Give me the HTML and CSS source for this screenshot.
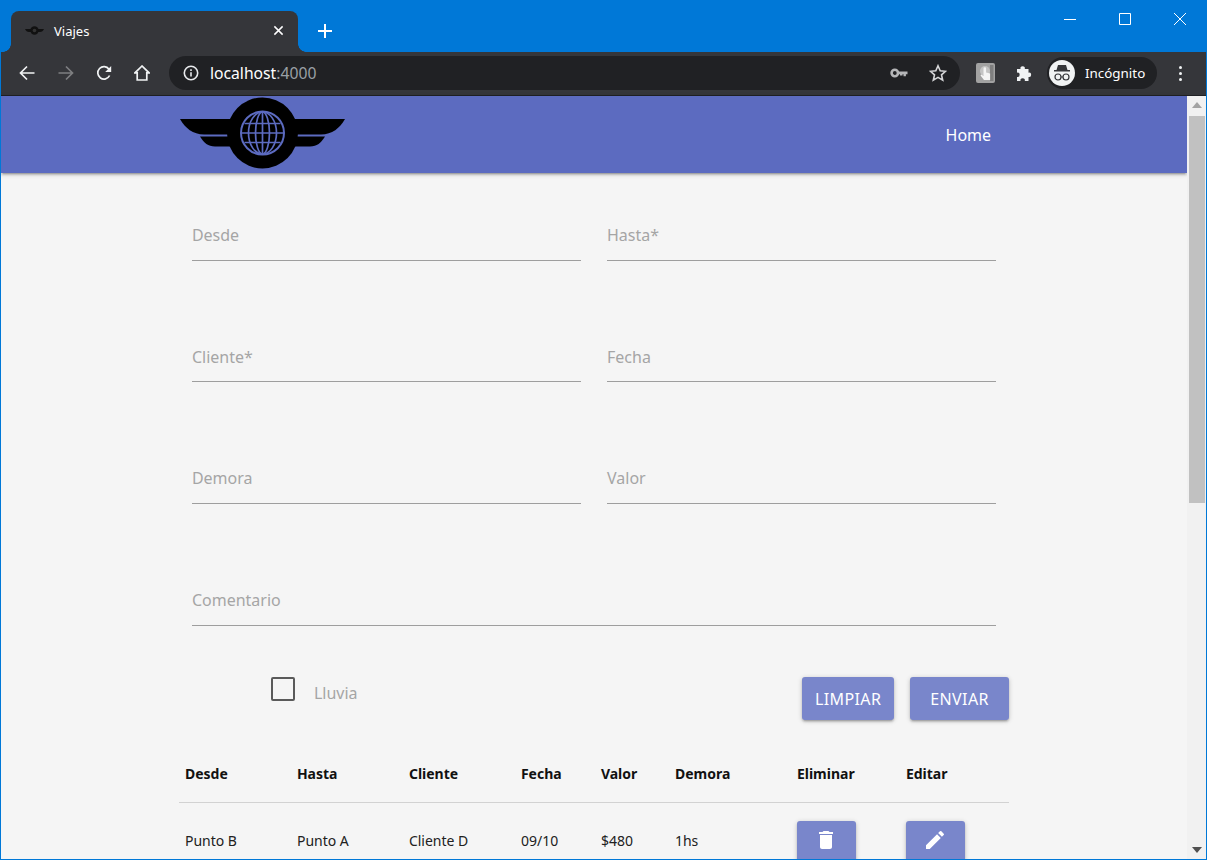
FILE: index.html
```html
<!DOCTYPE html>
<html lang="es">
<head>
    <meta charset="UTF-8">
    <meta name="viewport" content="width=device-width, initial-scale=1.0">
    <title>Viajes</title>
    <link rel="stylesheet" href="styles.css">
</head>
<body>
    <div class="window">
        <!-- browser chrome -->
        <div class="titlebar">
            <div class="tab">
                <svg class="favicon" viewBox="0 0 19 9">
                    <path d="M0 3h19c-1 2-2 3-4 3h-2.500a3.500 3.500 0 0 1-6 0H4C2 6 1 5 0 3z"/>
                    <circle cx="9.500" cy="4.500" r="4.200"/>
                    <circle class="favicon-eye" cx="9.500" cy="4.500" r="1.800"/>
                </svg>
                <span class="tab-title">Viajes</span>
                <svg class="tab-close" viewBox="0 0 12 12"><path d="M1.500 1.500l9 9M10.500 1.500l-9 9"/></svg>
            </div>
            <svg class="new-tab" viewBox="0 0 14 14"><path d="M7 0v14M0 7h14"/></svg>
            <div class="window-controls">
                <div class="win-btn"><svg viewBox="0 0 12 12"><path d="M0 6.500h12"/></svg></div>
                <div class="win-btn"><svg viewBox="0 0 12 12"><path d="M.5.5h11v11H.5z"/></svg></div>
                <div class="win-btn"><svg viewBox="0 0 12 12"><path d="M0 0l12 12M12 0L0 12"/></svg></div>
            </div>
        </div>
        <div class="toolbar">
            <div class="tool tool-back"><svg viewBox="0 0 16 16"><path d="M15.500 8H1.500M8 1.500L1.500 8 8 14.500"/></svg></div>
            <div class="tool tool-off"><svg viewBox="0 0 16 16"><path d="M.5 8h14M8 1.500L14.500 8 8 14.500"/></svg></div>
            <div class="tool"><svg viewBox="0 0 16 16"><path d="M13.600 10.500A6.200 6.200 0 1 1 13 4.200"/><path class="solid" d="M15.200.9v6h-6z"/></svg></div>
            <div class="tool"><svg viewBox="0 0 16 16"><path d="M8 1L1 7.800h2.200V15h9.600V7.800H15z"/></svg></div>
            <div class="address">
                <svg class="info" viewBox="0 0 16 16"><circle cx="8" cy="8" r="6.700"/><path d="M8 7.200v4.400M8 4.200v1.700"/></svg>
                <span class="host">localhost<span class="port">:4000</span></span>
                <svg class="key" viewBox="0 0 18 12"><circle cx="4.800" cy="6" r="3.200"/><path class="solid" d="M8 4.400h9.500v2.800h-1.600v2h-2.400v-2h-1v1.200H10V7.200H8z"/></svg>
                <svg class="star" viewBox="0 0 18 18"><path d="M9 1.800l2.200 5 5.300.5-4 3.600 1.200 5.300L9 13.400l-4.700 2.800 1.200-5.300-4-3.600 5.300-.5z"/></svg>
            </div>
            <svg class="ext-shot" viewBox="0 0 19 20">
                <rect class="ext-tile" width="19" height="20" rx="2"/>
                <rect class="ext-shade" x="14" y="2" width="3.500" height="16"/>
                <circle class="ext-glow" cx="9" cy="8" r="5"/>
                <path class="ext-hand" d="M7.500 5.500a1.300 1.300 0 0 1 2.600 0v4l4 1v6.500H8L4.500 12.500l1-1 2 1.500z"/>
            </svg>
            <svg class="puzzle" viewBox="0 0 18 18"><path d="M2 5h3.500a2.200 2.200 0 1 1 4.300 0h3.700v3.700a2.200 2.200 0 1 1 0 4.300V17H9.800a2.200 2.200 0 1 0-4.300 0H2v-4a2.200 2.200 0 1 0 0-4.300z"/></svg>
            <div class="profile">
                <div class="avatar">
                    <svg viewBox="0 0 26 26">
                        <path class="spy-hat" d="M9 5h8l1.500 5H21v1.500H5V10h2.500z"/>
                        <circle class="spy-eye" cx="9" cy="17" r="3"/>
                        <circle class="spy-eye" cx="17" cy="17" r="3"/>
                        <path class="spy-eye" d="M12 17h2"/>
                    </svg>
                </div>
                <span>Incógnito</span>
            </div>
            <div class="menu-dots"><i></i><i></i><i></i></div>
        </div>

        <div class="viewport">
            <div class="page">
                <nav class="nav">
                    <div class="nav-inner">
                        <svg class="logo" viewBox="0 0 165 72">
                            <path d="M0 22H50V37.500H24C13 37.500 5 31 0 22Z"/>
                            <path d="M165 22H115V37.500H141C152 37.500 160 31 165 22Z"/>
                            <path d="M20 39.500H50V49.500H35C28 49.500 24 46 20 39.500Z"/>
                            <path d="M145 39.500H115V49.500H130C137 49.500 141 46 145 39.500Z"/>
                            <circle cx="82.500" cy="36" r="35.500"/>
                            <circle class="globe-ring" cx="82.500" cy="36" r="21.500"/>
                            <g class="globe-lines">
                                <path d="M82.500 15V57M62 36H103M64.500 26.500H100.500M64.500 45.500H100.500"/>
                                <ellipse cx="82.500" cy="36" rx="7" ry="21"/>
                                <ellipse cx="82.500" cy="36" rx="14" ry="21"/>
                            </g>
                        </svg>
                        <a class="nav-link">Home</a>
                    </div>
                </nav>

                <div class="container">
                    <form class="trip-form">
                        <div class="field">Desde</div>
                        <div class="field">Hasta*</div>
                        <div class="field">Cliente*</div>
                        <div class="field">Fecha</div>
                        <div class="field">Demora</div>
                        <div class="field">Valor</div>
                        <div class="field field-wide">Comentario</div>
                    </form>

                    <div class="form-actions">
                        <label class="check">
                            <span class="check-box"></span>
                            <span class="check-label">Lluvia</span>
                        </label>
                        <div class="buttons">
                            <button type="button" class="btn btn-clear">Limpiar</button>
                            <button type="button" class="btn btn-send">Enviar</button>
                        </div>
                    </div>

                    <table class="trips">
                        <thead>
                            <tr>
                                <th class="col-place">Desde</th>
                                <th class="col-place">Hasta</th>
                                <th class="col-place">Cliente</th>
                                <th class="col-date">Fecha</th>
                                <th class="col-value">Valor</th>
                                <th class="col-delay">Demora</th>
                                <th class="col-action">Eliminar</th>
                                <th>Editar</th>
                            </tr>
                        </thead>
                        <tbody>
                            <tr>
                                <td>Punto B</td>
                                <td>Punto A</td>
                                <td>Cliente D</td>
                                <td>09/10</td>
                                <td>$480</td>
                                <td>1hs</td>
                                <td class="cell-action">
                                    <button type="button" class="btn btn-icon">
                                        <svg viewBox="0 0 24 24"><path d="M6 19c0 1.100.9 2 2 2h8c1.100 0 2-.9 2-2V7H6v12zM19 4h-3.500l-1-1h-5l-1 1H5v2h14V4z"/></svg>
                                    </button>
                                </td>
                                <td class="cell-action">
                                    <button type="button" class="btn btn-icon">
                                        <svg viewBox="0 0 24 24"><path d="M3 17.250V21h3.750L17.810 9.940l-3.750-3.750L3 17.250zM20.710 7.040a1 1 0 0 0 0-1.410l-2.340-2.340a1 1 0 0 0-1.410 0l-1.830 1.830 3.750 3.750 1.830-1.830z"/></svg>
                                    </button>
                                </td>
                            </tr>
                        </tbody>
                    </table>
                </div>
            </div>

            <div class="scrollbar">
                <div class="arrow-up"></div>
                <div class="thumb"></div>
                <div class="arrow-down"></div>
            </div>
        </div>
    </div>
</body>
</html>
```

FILE: styles.css
```css
* {
    box-sizing: border-box;
}

html, body {
    margin: 0;
    height: 100%;
    overflow: hidden;
}

body {
    font-family: "Noto Sans", "Open Sans", sans-serif;
}

.window {
    display: flex;
    flex-direction: column;
    width: 1207px;
    height: 860px;
    border: 1px solid #0078d7;
    overflow: hidden;
}

/* title bar */
.titlebar {
    display: flex;
    align-items: flex-start;
    flex: none;
    height: 51px;
    background-color: #0078d7;
}

.tab {
    position: relative;
    display: flex;
    align-items: center;
    width: 287px;
    height: 41px;
    margin: 10px 0 0 10px;
    padding: 0 14px 2px 14px;
    background-color: #35363a;
    border-radius: 8px 8px 0 0;
    color: #fff;
    font-size: 13px;
}

.tab::before, .tab::after {
    content: "";
    position: absolute;
    bottom: 0;
    width: 8px;
    height: 8px;
    background: radial-gradient(circle at 0 0, #0078d7 7.500px, #35363a 8px);
}

.tab::before {
    left: -8px;
}

.tab::after {
    right: -8px;
    transform: scaleX(-1);
}

.favicon {
    width: 19px;
    height: 9px;
    margin-right: 10px;
    fill: #111;
}

.favicon-eye {
    fill: #333;
}

.tab-title {
    flex: 1;
}

.tab-close {
    width: 11px;
    height: 11px;
    fill: none;
    stroke: #fff;
    stroke-width: 1.600;
}

.new-tab {
    width: 14px;
    height: 14px;
    margin: 23px 0 0 20px;
    fill: none;
    stroke: #fff;
    stroke-width: 2;
}

.window-controls {
    display: flex;
    margin-left: auto;
    margin-right: -1px;
}

.win-btn {
    display: flex;
    align-items: center;
    justify-content: center;
    width: 55px;
    height: 35px;
}

.win-btn svg {
    width: 12px;
    height: 12px;
    fill: none;
    stroke: #fff;
    stroke-width: 1;
}

/* toolbar */
.toolbar {
    display: flex;
    align-items: center;
    flex: none;
    height: 44px;
    padding: 0 0 1px 8px;
    background-color: #35363a;
    border-bottom: 1px solid #202124;
}

.tool {
    display: flex;
    align-items: center;
    justify-content: center;
    width: 38px;
    height: 34px;
}

.tool svg {
    width: 16px;
    height: 16px;
    fill: none;
    stroke: #f1f3f4;
    stroke-width: 1.700;
}

.tool svg .solid {
    fill: #f1f3f4;
    stroke: none;
}

.tool-back {
    margin: 0 1px 0 -1px;
}

.tool-off svg {
    stroke: #7e7f81;
}

.address {
    display: flex;
    align-items: center;
    width: 791px;
    height: 34px;
    margin-left: 8px;
    padding: 0 13px 0 14px;
    background-color: #202124;
    border-radius: 17px;
    color: #fff;
    font-size: 15.700px;
}

.info {
    width: 16px;
    height: 16px;
    margin-right: 11px;
    fill: none;
    stroke: #e8eaed;
    stroke-width: 1.600;
}

.host {
    flex: 1;
}

.port {
    color: #9aa0a6;
}

.key {
    width: 18px;
    height: 12px;
    margin-right: 21px;
    fill: none;
    stroke: #b5b6b8;
    stroke-width: 2.600;
}

.key .solid {
    fill: #b5b6b8;
    stroke: none;
}

.star {
    width: 18px;
    height: 18px;
    fill: none;
    stroke: #d5d6d8;
    stroke-width: 1.600;
}

.ext-shot {
    width: 19px;
    height: 20px;
    margin-left: 16px;
}

.ext-tile {
    fill: #a2a2a2;
}

.ext-shade {
    fill: #7f7f7f;
}

.ext-glow {
    fill: #c4c4c4;
}

.ext-hand {
    fill: #f4f4f4;
}

.puzzle {
    width: 18px;
    height: 18px;
    margin-left: 20px;
    fill: #f1f3f4;
}

.profile {
    display: flex;
    align-items: center;
    width: 110px;
    height: 32px;
    margin-left: 14px;
    padding-left: 2px;
    background-color: #202124;
    border-radius: 16px;
    color: #fff;
    font-size: 13.400px;
}

.avatar {
    display: flex;
    width: 26px;
    height: 26px;
    margin-right: 10px;
    background-color: #f1f3f4;
    border-radius: 50%;
}

.spy-hat {
    fill: #35363a;
}

.spy-eye {
    fill: none;
    stroke: #35363a;
    stroke-width: 1.200;
}

.menu-dots {
    display: flex;
    flex-direction: column;
    gap: 3px;
    margin-left: 22px;
}

.menu-dots i {
    display: block;
    width: 3px;
    height: 3px;
    background-color: #f1f3f4;
    border-radius: 50%;
}

/* page */
.viewport {
    display: flex;
    flex: 1;
    min-height: 0;
}

.page {
    flex: 1;
    min-width: 0;
    background-color: #f5f5f5;
}

.nav {
    position: relative;
    height: 77px;
    background-color: #5c6bc0;
    box-shadow: 0 2px 2px 0 rgba(0,0,0,0.14), 0 3px 1px -2px rgba(0,0,0,0.12), 0 1px 5px 0 rgba(0,0,0,0.2);
}

.nav-inner {
    display: flex;
    align-items: flex-start;
    justify-content: space-between;
    width: 70%;
    height: 100%;
    margin: 0 auto;
    padding-left: 1px;
}

.logo {
    width: 165px;
    height: 72px;
    margin-top: 1px;
    fill: #000;
}

.globe-ring {
    fill: #000;
    stroke: #5c6bc0;
    stroke-width: 2;
}

.globe-lines {
    fill: none;
    stroke: #5c6bc0;
    stroke-width: 1.700;
}

.nav-link {
    margin-right: 18px;
    color: #fff;
    font-size: 16px;
    line-height: 79px;
}

.container {
    width: 70%;
    margin: 0 auto;
}

.trip-form {
    display: grid;
    grid-template-columns: 1fr 1fr;
    column-gap: 26px;
    row-gap: 72.600px;
    padding: 38.800px 13px 0;
}

.field {
    display: flex;
    align-items: center;
    height: 49px;
    padding-bottom: 1px;
    border-bottom: 1px solid #9e9e9e;
    color: #a5a5a5;
    font-size: 16px;
}

.field-wide {
    grid-column: span 2;
}

.form-actions {
    display: flex;
    justify-content: space-between;
    margin-top: 51.400px;
}

.check {
    display: flex;
    align-items: flex-start;
    margin-left: 92px;
}

.check-box {
    width: 24px;
    height: 24px;
    border: 2px solid #5a5a5a;
    border-radius: 2px;
}

.check-label {
    margin-left: 19px;
    color: #a5a5a5;
    font-size: 16px;
    line-height: 32px;
}

.buttons {
    display: flex;
    gap: 16px;
}

.btn {
    display: flex;
    align-items: center;
    justify-content: center;
    padding: 0;
    background-color: #7986cb;
    border: none;
    border-radius: 3px;
    box-shadow: 0 2px 2px 0 rgba(0,0,0,0.14), 0 3px 1px -2px rgba(0,0,0,0.12), 0 1px 5px 0 rgba(0,0,0,0.2);
    color: #fff;
    font-family: inherit;
    font-size: 16px;
    letter-spacing: .4px;
    text-transform: uppercase;
}

.btn-clear, .btn-send {
    height: 43px;
    padding-top: 2px;
}

.btn-clear {
    width: 92px;
}

.btn-send {
    width: 99px;
}

.btn-icon {
    align-items: flex-start;
    width: 59px;
    height: 44px;
    padding-top: 7px;
}

.btn-icon svg {
    width: 24px;
    height: 24px;
    fill: #fff;
}

.trips {
    width: 100%;
    margin-top: 24px;
    border-collapse: collapse;
    table-layout: fixed;
    color: #212121;
    font-size: 14px;
}

.trips th {
    height: 59px;
    padding: 0 6px;
    border-bottom: 1px solid #d2d2d2;
    color: #111;
    text-align: left;
}

.trips td {
    padding: 15px 6px 21px;
}

.trips .cell-action {
    padding: 18px 6px;
}

.col-place {
    width: 112px;
}

.col-date {
    width: 80px;
}

.col-value {
    width: 74px;
}

.col-delay {
    width: 122px;
}

.col-action {
    width: 109px;
}

.scrollbar {
    position: relative;
    flex: none;
    width: 19px;
    padding: 20px 1px 0 2px;
    background-color: #f1f1f1;
}

.thumb {
    height: 387px;
    background-color: #c1c1c1;
}

.arrow-up, .arrow-down {
    position: absolute;
    left: 5px;
    width: 0;
    height: 0;
    border-left: 5px solid transparent;
    border-right: 5px solid transparent;
}

.arrow-up {
    top: 6px;
    border-bottom: 6px solid #a3a3a3;
}

.arrow-down {
    bottom: 6px;
    border-top: 6px solid #505050;
}
```
